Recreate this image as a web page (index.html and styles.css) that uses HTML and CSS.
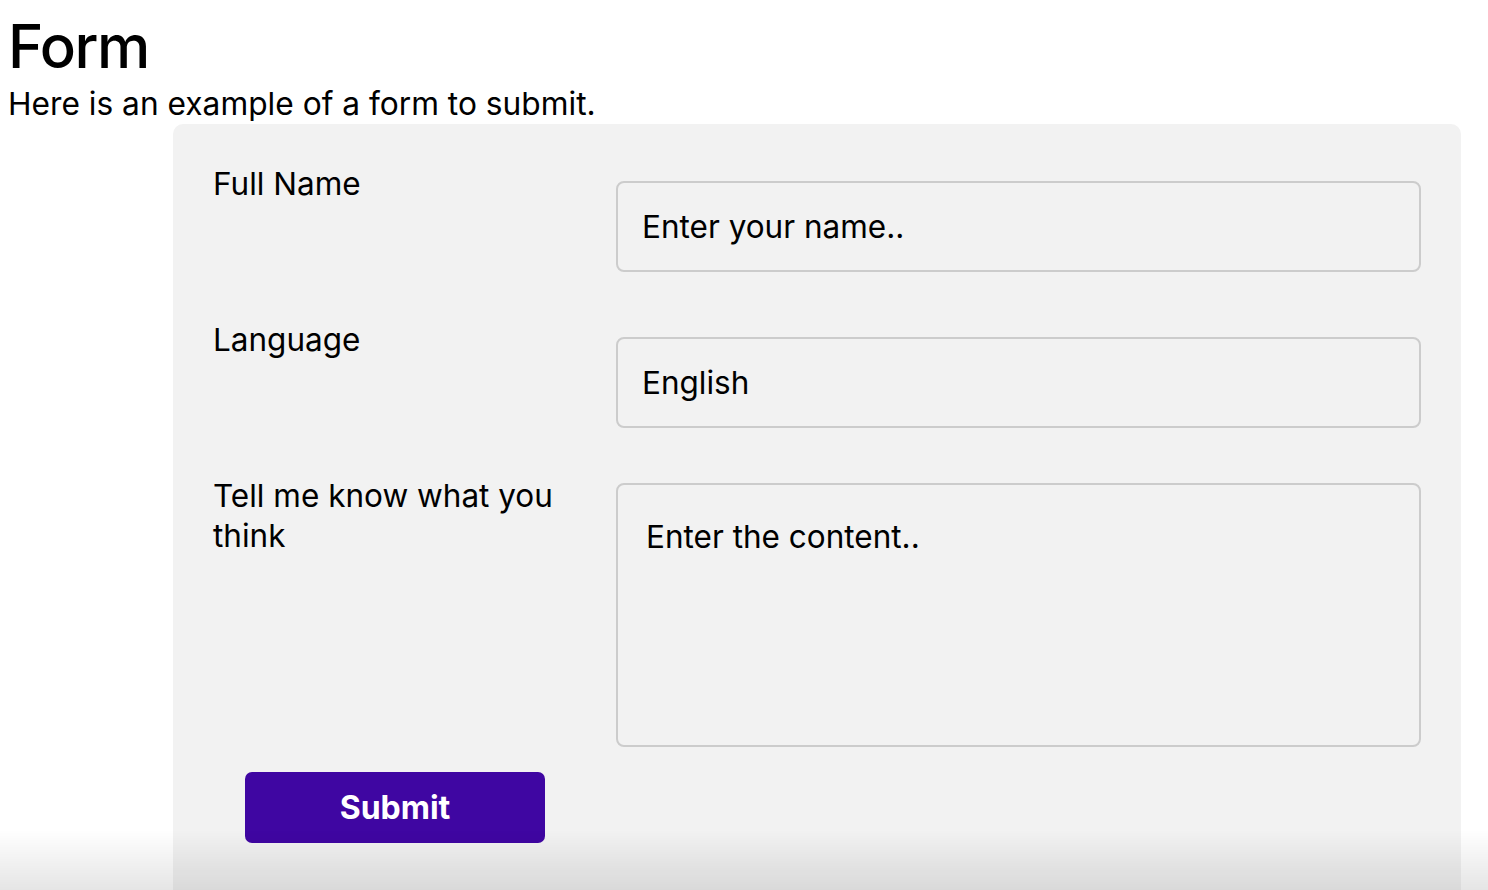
FILE: index.html
```html
<!DOCTYPE html>
<html lang="en">
<head>
<meta charset="utf-8">
<title>Form</title>
<link rel="stylesheet" href="styles.css">
</head>
<body>
<h1 class="title">Form</h1>
<p class="intro">Here is an example of a form to submit.</p>
<form class="panel">
  <div class="row">
    <label class="label" for="fname">Full Name</label>
    <input class="field" id="fname" type="text" placeholder="Enter your name..">
  </div>
  <div class="row">
    <label class="label" for="lang">Language</label>
    <select class="field select" id="lang">
      <option>English</option>
    </select>
  </div>
  <div class="row">
    <label class="label" for="content">Tell me know what you think</label>
    <textarea class="area" id="content" placeholder="Enter the content.."></textarea>
  </div>
  <button class="submit" type="button">Submit</button>
</form>
<div class="fade"></div>
</body>
</html>
```
FILE: styles.css
```css
html, body {
  background: #ffffff;
}
body {
  margin: 8px;
  font-family: Inter, "Noto Sans", sans-serif;
  color: #000;
}
.title {
  margin: 0;
  font-size: 60px;
  font-weight: 500;
  line-height: 76px;
  letter-spacing: -1.5px;
}
.intro {
  margin: 0;
  font-size: 31.7px;
  line-height: 40px;
}
.panel {
  margin: 0 0 0 165px;
  width: 1288px;
  box-sizing: border-box;
  background: #f2f2f2;
  border-radius: 10px;
  padding: 40px 40px 60px 40px;
  min-height: 780px;
}
.row {
  display: flex;
  align-items: flex-start;
}
.label {
  flex: 0 0 403px;
  box-sizing: border-box;
  padding-right: 30px;
  font-size: 31.5px;
  line-height: 40px;
}
.field {
  flex: 1;
  box-sizing: border-box;
  height: 91px;
  margin: 17px 0 48px 0;
  padding: 0 24px;
  border: 2px solid #cccccc;
  border-radius: 8px;
  background: #f2f2f2;
  font-family: Inter, "Noto Sans", sans-serif;
  font-size: 31.5px;
  color: #000;
  outline: none;
}
.field::placeholder {
  color: #000;
  opacity: 1;
}
.select {
  appearance: none;
  -webkit-appearance: none;
}
.area {
  flex: 1;
  box-sizing: border-box;
  height: 264px;
  margin: 7px 0 25px 0;
  padding: 32px 28px;
  border: 2px solid #cccccc;
  border-radius: 8px;
  background: #f2f2f2;
  font-family: Inter, "Noto Sans", sans-serif;
  font-size: 31.5px;
  line-height: 40px;
  color: #000;
  resize: none;
  outline: none;
}
.area::placeholder {
  color: #000;
  opacity: 1;
}
.submit {
  display: block;
  margin-left: 32px;
  width: 300px;
  height: 71px;
  border: none;
  border-radius: 7px;
  background: #3f06a2;
  color: #ffffff;
  font-family: Inter, "Noto Sans", sans-serif;
  font-size: 32px;
  font-weight: 700;
}
.fade {
  position: fixed;
  left: 0;
  right: 0;
  bottom: 0;
  height: 60px;
  pointer-events: none;
  background: linear-gradient(to bottom, rgba(0,0,0,0), rgba(0,0,0,0.1));
}
```
